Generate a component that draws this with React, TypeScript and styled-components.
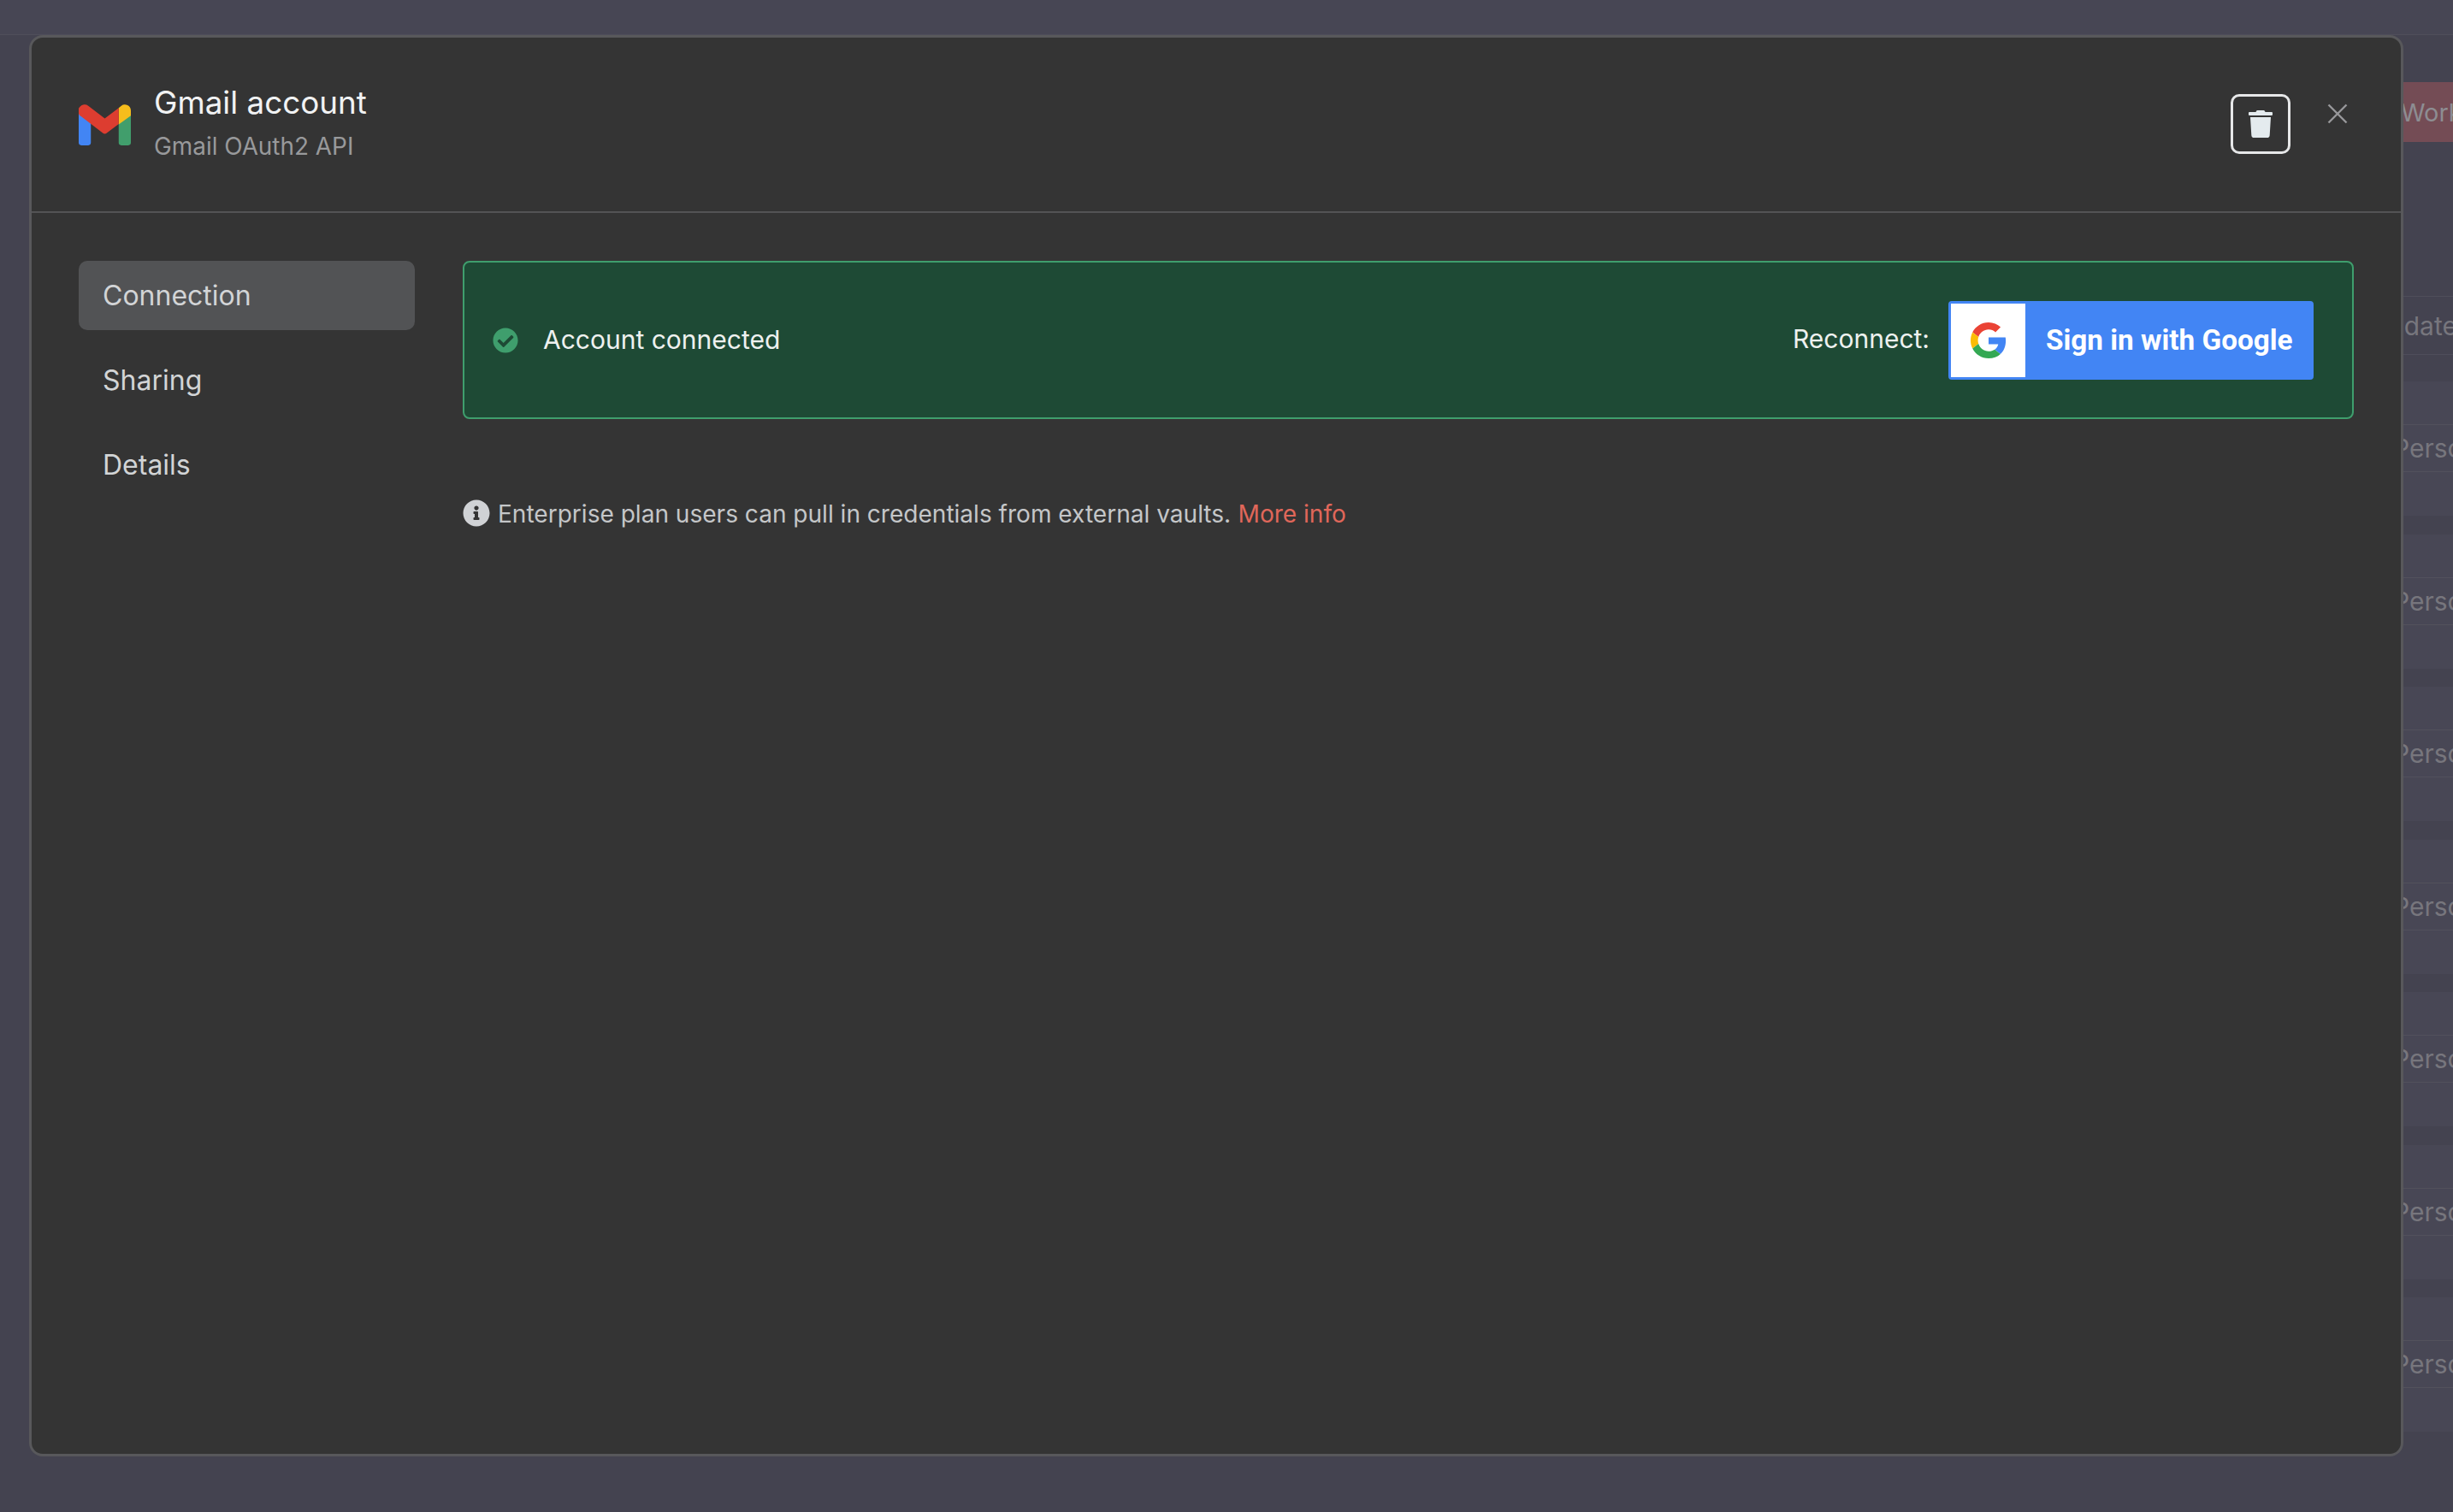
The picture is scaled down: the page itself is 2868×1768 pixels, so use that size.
import React from "react";
import styled, { createGlobalStyle } from "styled-components";
import { FaCheckCircle, FaInfoCircle, FaTrash } from "react-icons/fa";

const Global = createGlobalStyle`
  html, body { margin: 0; padding: 0; background: #444350; }
  body { font-family: Inter, "Liberation Sans", sans-serif; }
  * { box-sizing: border-box; }
`;

const Page = styled.div`
  position: relative;
  width: 2868px;
  height: 1768px;
  overflow: hidden;
  background: #444350;
`;

const TopStrip = styled.div`
  height: 41px;
  background: #474654;
  border-bottom: 1px solid #4f4e5a;
  margin-bottom: 55px;
`;

const Backdrop = styled.div`
  margin-left: 2700px;
  display: flex;
  flex-direction: column;
`;

const TagRow = styled.div`
  height: 70px;
  margin-bottom: 180px;
  padding-left: 107px;
  display: flex;
  align-items: center;
  background: #744c55;
  font-size: 29px;
  color: #8d8d92;
  white-space: nowrap;
`;

const HeadRow = styled.div`
  height: 69px;
  margin-bottom: 31px;
  padding-left: 70px;
  display: flex;
  align-items: center;
  border-top: 1px solid #4f4e5a;
  border-bottom: 1px solid #4f4e5a;
  font-size: 30px;
  color: #77767d;
  white-space: nowrap;
`;

const Card = styled.div`
  height: 157px;
  margin-bottom: 21.5px;
  padding-top: 50px;
  background: #484755;
`;

const Cell = styled.div`
  height: 56px;
  padding-left: 98px;
  display: flex;
  align-items: center;
  border-top: 1px solid #52515c;
  border-bottom: 1px solid #52515c;
  font-size: 30px;
  color: #77767d;
  white-space: nowrap;
`;

const Modal = styled.div`
  position: absolute;
  left: 34px;
  top: 41px;
  width: 2776px;
  height: 1662px;
  display: flex;
  flex-direction: column;
  background: #343434;
  border: 3px solid #58585b;
  border-radius: 16px;
`;

const Header = styled.header`
  height: 205px;
  flex: none;
  display: flex;
  align-items: center;
  justify-content: space-between;
  padding: 0 62px 0 55px;
  border-bottom: 2px solid #535355;
`;

const Brand = styled.div`
  display: flex;
  align-items: center;
  gap: 27px;
`;

const Titles = styled.div`
  display: flex;
  flex-direction: column;
  gap: 12px;
  margin-bottom: 5px;
`;

const Title = styled.div`
  font-size: 36.8px;
  line-height: 44px;
  color: #f1f2f3;
`;

const Subtitle = styled.div`
  font-size: 27.9px;
  line-height: 34px;
  color: #98999b;
`;

const Actions = styled.div`
  display: flex;
  align-items: flex-start;
  gap: 43px;
  margin-bottom: 2px;
`;

const TrashButton = styled.button`
  width: 70px;
  height: 70px;
  padding: 0;
  display: flex;
  align-items: center;
  justify-content: center;
  background: transparent;
  border: 3px solid #e6e7e8;
  border-radius: 10px;
  color: #e4ebee;
  font-size: 32px;
`;

const CloseButton = styled.button`
  width: 24px;
  height: 24px;
  padding: 0;
  margin-top: 11px;
  display: flex;
  background: transparent;
  border: 0;
  color: #98989b;
`;

const Body = styled.div`
  flex: 1;
  display: flex;
  gap: 56px;
  padding: 56px 55px 0 55px;
`;

const Nav = styled.nav`
  width: 393px;
  flex: none;
  display: flex;
  flex-direction: column;
  gap: 18px;
`;

const NavItem = styled.div<{ $active?: boolean }>`
  height: 81px;
  display: flex;
  align-items: center;
  padding-left: 28px;
  border-radius: 10px;
  font-size: 32px;
  color: #d2d4d6;
  background: ${(p) => (p.$active ? "#525355" : "transparent")};
`;

const Content = styled.main`
  flex: 1;
  min-width: 0;
`;

const Banner = styled.section`
  height: 185px;
  display: flex;
  align-items: center;
  padding: 0 45px 0 33px;
  background: #1e4a35;
  border: 2px solid #3f9e6d;
  border-radius: 8px;
`;

const CheckIcon = styled(FaCheckCircle)`
  width: 30px;
  height: 30px;
  flex: none;
  color: #3f9e6d;
`;

const BannerText = styled.div`
  margin: 0 0 2px 29px;
  font-size: 30px;
  color: #eef1ef;
`;

const Reconnect = styled.div`
  margin: 0 22px 4px auto;
  font-size: 30px;
  color: #eef1ef;
`;

const GoogleButton = styled.button`
  width: 427px;
  height: 92px;
  padding: 0;
  display: flex;
  align-items: stretch;
  background: #4285f4;
  border: 3px solid #4285f4;
  border-radius: 4px;
  font-family: Roboto, "Liberation Sans", sans-serif;
`;

const GoogleMark = styled.span`
  width: 87px;
  flex: none;
  display: flex;
  align-items: center;
  justify-content: center;
  background: #ffffff;
`;

const GoogleLabel = styled.span`
  flex: 1;
  display: flex;
  align-items: center;
  padding-left: 24px;
  font-size: 33.3px;
  font-weight: 700;
  color: #ffffff;
  white-space: nowrap;
`;

const InfoRow = styled.p`
  margin: 91px 0 0;
  height: 40px;
  display: flex;
  align-items: center;
  gap: 9px;
  font-size: 28.05px;
  color: #c4c6c8;
`;

const InfoIcon = styled(FaInfoCircle)`
  width: 32px;
  height: 32px;
  flex: none;
  margin-bottom: 3px;
  color: #d0d2d5;
`;

const MoreInfo = styled.a`
  margin-left: 0.3em;
  color: #e0675a;
`;

const GmailLogo = () => (
  <svg width="61" height="48" viewBox="0 0 60 47" aria-hidden="true">
    <path fill="#4285f4" d="M0 8 L14 18 V44 a3 3 0 0 1 -3 3 H3 a3 3 0 0 1 -3 -3 Z" />
    <path fill="#419e6c" d="M46 22 L60 12 V44 a3 3 0 0 1 -3 3 H49 a3 3 0 0 1 -3 -3 Z" />
    <path fill="#f6bd1c" d="M46 4 L49 1.5 A7 7 0 0 1 60 7 V13 L46 23 Z" />
    <path fill="#dd3d30" d="M1.5 2.5 A7 7 0 0 1 11 1.5 L30 16 L46 4 V22.5 L32 33 a3.4 3.4 0 0 1 -4 0 L3 14 A7.4 7.4 0 0 1 1.5 2.5 Z" />
  </svg>
);

const GoogleG = () => (
  <svg width="42" height="42" viewBox="0 0 48 48" aria-hidden="true">
    <path fill="#EA4335" d="M24 9.5c3.54 0 6.71 1.22 9.21 3.6l6.85-6.85C35.9 2.38 30.47 0 24 0 14.62 0 6.51 5.38 2.56 13.22l7.98 6.19C12.43 13.72 17.74 9.5 24 9.5z" />
    <path fill="#4285F4" d="M46.98 24.55c0-1.57-.15-3.09-.38-4.55H24v9.02h12.94c-.58 2.96-2.26 5.48-4.78 7.18l7.73 6c4.51-4.18 7.09-10.36 7.09-17.65z" />
    <path fill="#FBBC05" d="M10.53 28.59c-.48-1.45-.76-2.99-.76-4.59s.27-3.14.76-4.59l-7.98-6.19C.92 16.46 0 20.12 0 24c0 3.88.92 7.54 2.56 10.78l7.97-6.19z" />
    <path fill="#34A853" d="M24 48c6.48 0 11.93-2.13 15.89-5.81l-7.73-6c-2.15 1.45-4.92 2.3-8.16 2.3-6.26 0-11.57-4.22-13.47-9.91l-7.98 6.19C6.51 42.62 14.62 48 24 48z" />
  </svg>
);

const CloseIcon = () => (
  <svg width="24" height="24" viewBox="0 0 24 24" fill="none" stroke="currentColor" strokeWidth="2.4" aria-hidden="true">
    <path d="M1.5 1.5 L22.5 22.5 M22.5 1.5 L1.5 22.5" />
  </svg>
);

const rows = [0, 1, 2, 3, 4, 5, 6];

export default function App() {
  return (
    <Page>
      <Global />
      <TopStrip />
      <Backdrop>
        <TagRow>Workflow</TagRow>
        <HeadRow>Updated</HeadRow>
        {rows.map((r) => (
          <Card key={r}>
            <Cell>Personal</Cell>
          </Card>
        ))}
      </Backdrop>
      <Modal>
        <Header>
          <Brand>
            <GmailLogo />
            <Titles>
              <Title>Gmail account</Title>
              <Subtitle>Gmail OAuth2 API</Subtitle>
            </Titles>
          </Brand>
          <Actions>
            <TrashButton aria-label="Delete">
              <FaTrash />
            </TrashButton>
            <CloseButton aria-label="Close">
              <CloseIcon />
            </CloseButton>
          </Actions>
        </Header>
        <Body>
          <Nav>
            <NavItem $active>Connection</NavItem>
            <NavItem>Sharing</NavItem>
            <NavItem>Details</NavItem>
          </Nav>
          <Content>
            <Banner>
              <CheckIcon />
              <BannerText>Account connected</BannerText>
              <Reconnect>Reconnect:</Reconnect>
              <GoogleButton>
                <GoogleMark>
                  <GoogleG />
                </GoogleMark>
                <GoogleLabel>Sign in with Google</GoogleLabel>
              </GoogleButton>
            </Banner>
            <InfoRow>
              <InfoIcon />
              <span>
                Enterprise plan users can pull in credentials from external vaults.
                <MoreInfo>More info</MoreInfo>
              </span>
            </InfoRow>
          </Content>
        </Body>
      </Modal>
    </Page>
  );
}
